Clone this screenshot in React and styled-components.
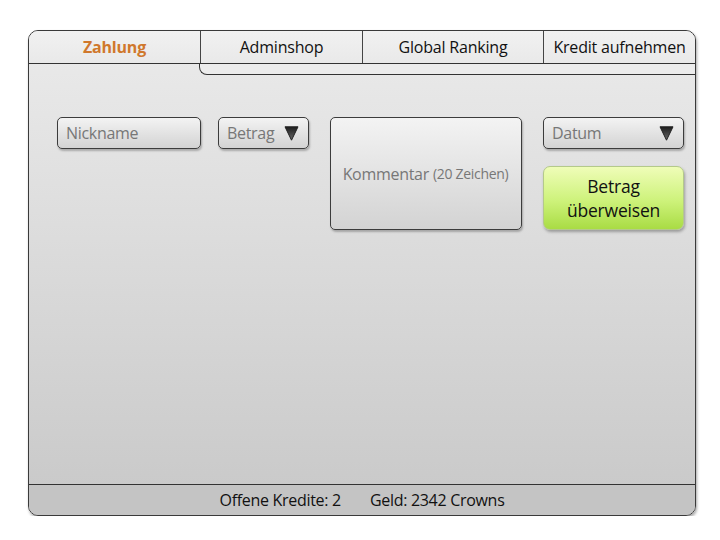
import React from "react";
import styled, { createGlobalStyle } from "styled-components";

const Global = createGlobalStyle`
  html, body { margin: 0; padding: 0; background: #ffffff; }
  body { font-family: "Open Sans", "Noto Sans", sans-serif; }
`;

const Page = styled.div`
  padding: 30px 24px 0 28px;
`;

const Panel = styled.div`
  box-sizing: border-box;
  width: 668px;
  height: 486px;
  border: 1.5px solid #3a3a3a;
  border-radius: 10px;
  overflow: hidden;
  display: flex;
  flex-direction: column;
  background: linear-gradient(#ebebeb, #c8c8c8);
  box-shadow: 1px 2px 3px rgba(0, 0, 0, 0.35);
`;

const TabBar = styled.div`
  display: flex;
  height: 32px;
  border-bottom: 1.5px solid #333;
  background: linear-gradient(#f1f1f1, #e9e9e9);
`;

const Tab = styled.div`
  box-sizing: border-box;
  width: ${(p) => (p.$w ? `${p.$w}px` : "auto")};
  flex: ${(p) => (p.$w ? "none" : "1")};
  display: flex;
  align-items: center;
  justify-content: center;
  border-left: ${(p) => (p.$first ? "none" : "1.5px solid #444")};
  font-size: 16px;
  font-weight: ${(p) => (p.$active ? 700 : 400)};
  color: ${(p) => (p.$active ? "#d0782c" : "#111")};
  letter-spacing: -0.2px;
`;

const LedgeRow = styled.div`
  display: flex;
  padding-left: 170px;
`;

const Ledge = styled.div`
  flex: 1;
  height: 10px;
  border-left: 1.5px solid #333;
  border-bottom: 1.5px solid #333;
  border-bottom-left-radius: 8px;
  background: #ececec;
`;

const Content = styled.div`
  flex: 1;
  display: flex;
  align-items: flex-start;
  padding: 42px 0 0 28px;
`;

const Slot = styled.div`
  margin-left: ${(p) => p.$gap || 0}px;
  width: ${(p) => p.$w}px;
  display: flex;
  flex-direction: column;
  gap: 17px;
`;

const Field = styled.div`
  box-sizing: border-box;
  height: ${(p) => p.$h || 32}px;
  border: 1.5px solid #3c3c3c;
  border-radius: 5px;
  background: linear-gradient(#f3f3f3, #d3d3d3);
  box-shadow: 1px 2px 2px rgba(0, 0, 0, 0.25);
  display: flex;
  align-items: center;
  justify-content: ${(p) => (p.$center ? "center" : "space-between")};
  padding: 0 9px 0 8px;
  color: #777;
  font-size: 16px;
  letter-spacing: -0.3px;
`;

const Hint = styled.span`
  font-size: 14px;
  margin-left: 4px;
`;

const GoButton = styled.div`
  box-sizing: border-box;
  height: 64px;
  border-radius: 7px;
  border: 1px solid #b4c98a;
  background: linear-gradient(#effdb8, #cdf27a 55%, #a9dc44);
  box-shadow: 1px 2px 3px rgba(0, 0, 0, 0.3);
  display: flex;
  align-items: center;
  justify-content: center;
  text-align: center;
  font-size: 17.5px;
  line-height: 24px;
  letter-spacing: -0.2px;
  color: #111;
`;

const Footer = styled.div`
  height: 30px;
  border-top: 1.5px solid #333;
  background: #c4c4c4;
  display: flex;
  align-items: center;
  justify-content: center;
  gap: 29px;
  font-size: 16px;
  color: #111;
  letter-spacing: -0.3px;
`;

const Arrow = () => (
  <svg width="15" height="15" viewBox="0 0 15 15">
    <defs>
      <linearGradient id="arrowFill" x1="0" y1="0" x2="0" y2="1">
        <stop offset="0" stopColor="#1c1c1c" />
        <stop offset="1" stopColor="#6a6a6a" />
      </linearGradient>
    </defs>
    <path d="M1 0.8 H14 L7.5 14.2 Z" fill="url(#arrowFill)" stroke="#222" strokeWidth="1" strokeLinejoin="round" />
  </svg>
);

export default function App() {
  return (
    <Page>
      <Global />
      <Panel>
        <TabBar>
          <Tab $w={171} $first $active>Zahlung</Tab>
          <Tab $w={162}>Adminshop</Tab>
          <Tab $w={181}>Global Ranking</Tab>
          <Tab>Kredit aufnehmen</Tab>
        </TabBar>
        <LedgeRow>
          <Ledge />
        </LedgeRow>
        <Content>
          <Slot $w={144}>
            <Field>Nickname</Field>
          </Slot>
          <Slot $w={91} $gap={17}>
            <Field>
              Betrag <Arrow />
            </Field>
          </Slot>
          <Slot $w={192} $gap={21}>
            <Field $h={113} $center>
              Kommentar<Hint>(20 Zeichen)</Hint>
            </Field>
          </Slot>
          <Slot $w={141} $gap={21}>
            <Field>
              Datum <Arrow />
            </Field>
            <GoButton>
              Betrag
              <br />
              überweisen
            </GoButton>
          </Slot>
        </Content>
        <Footer>
          <span>Offene Kredite: 2</span>
          <span>Geld: 2342 Crowns</span>
        </Footer>
      </Panel>
    </Page>
  );
}
